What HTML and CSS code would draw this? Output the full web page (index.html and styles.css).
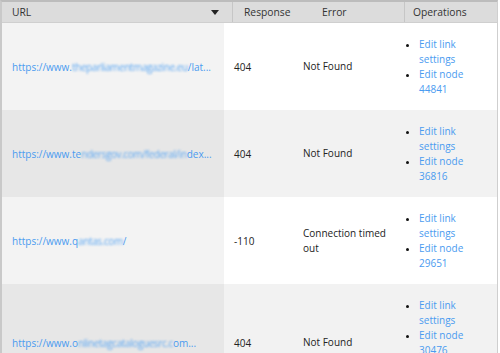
FILE: index.html
```html
<!DOCTYPE html>
<html>
<head>
<meta charset="utf-8">
<link rel="stylesheet" href="styles.css">
</head>
<body>
<div class="table">
  <div class="head">
    <div class="th th-url">URL <svg class="sort" width="8" height="5" viewBox="0 0 8 5"><path d="M0 0H8L4 5Z" fill="#222"/></svg></div>
    <div class="th th-resp">Response</div>
    <div class="th th-err">Error</div>
    <div class="th th-ops">Operations</div>
  </div>
  <div class="row">
    <div class="td url"><a href="#">https://www.<span class="blur">theparliamentmagazine.eu</span>/lat...</a></div>
    <div class="td resp">404</div>
    <div class="td err">Not Found</div>
    <div class="td ops"><ul><li><a href="#">Edit link settings</a></li><li><a href="#">Edit node 44841</a></li></ul></div>
  </div>
  <div class="row even">
    <div class="td url"><a href="#">https://www.te<span class="blur">ndersgov.com/federal/in</span>dex...</a></div>
    <div class="td resp">404</div>
    <div class="td err">Not Found</div>
    <div class="td ops"><ul><li><a href="#">Edit link settings</a></li><li><a href="#">Edit node 36816</a></li></ul></div>
  </div>
  <div class="row">
    <div class="td url"><a href="#">https://www.q<span class="blur">antas.com</span>/</a></div>
    <div class="td resp">-110</div>
    <div class="td err">Connection timed out</div>
    <div class="td ops"><ul><li><a href="#">Edit link settings</a></li><li><a href="#">Edit node 29651</a></li></ul></div>
  </div>
  <div class="row even">
    <div class="td url"><a href="#">https://www.o<span class="blur">nlinetagcataloguesrc.c</span>om...</a></div>
    <div class="td resp">404</div>
    <div class="td err">Not Found</div>
    <div class="td ops"><ul><li><a href="#">Edit link settings</a></li><li><a href="#">Edit node 30476</a></li><li><a href="#">Edit node 30477</a></li></ul></div>
  </div>
</div>
</body>
</html>
```
FILE: styles.css
```css
html, body {
  margin: 0;
  padding: 0;
  background: #fff;
}
body {
  font-family: "Open Sans", "DejaVu Sans", sans-serif;
  font-size: 10px;
  color: #222;
  width: 500px;
  height: 353px;
  overflow: hidden;
}
.table {
  width: 495px;
  border-left: 2px solid #c9c9c9;
  border-right: 1px solid #cfcfcf;
  border-top: 2px solid #bcbcbc;
}
.head {
  display: grid;
  grid-template-columns: 231px 78px 93px 1fr;
  height: 20px;
  background: #dcdcdc;
  border-bottom: 1px solid #cfcfcf;
  color: #333;
  font-size: 10.3px;
}
.th {
  display: flex;
  align-items: center;
  padding-left: 11px;
}
.th-url {
  padding-left: 10px;
  justify-content: space-between;
  padding-right: 13px;
  border-right: 1px solid #c6c6c6;
}
.th-ops {
  border-left: 1px solid #c6c6c6;
  padding-left: 8px;
}
.row {
  display: grid;
  grid-template-columns: 222px 71px 100px 1fr;
  align-items: stretch;
  background: #fff;
}
.row.even {
  background: #f2f2f2;
}
.td {
  display: flex;
  align-items: center;
}
.url {
  background: #f3f3f3;
  padding-left: 10px;
  white-space: nowrap;
  overflow: hidden;
}
.row.even .url {
  background: #e7e7e7;
}
.resp {
  padding-left: 10px;
}
.err {
  padding-left: 8px;
  padding-right: 6px;
  line-height: 15px;
}
a {
  color: #4a9bf0;
  text-decoration: none;
}
.blur {
  filter: blur(1.2px);
  color: #5ea8f2;
  letter-spacing: -0.4px;
}
.ops ul {
  margin: 14px 0 13px;
  padding: 0 12px 0 24px;
  line-height: 15px;
  list-style: disc;
}
.ops li::marker {
  color: #111;
  font-size: 9px;
}
```
